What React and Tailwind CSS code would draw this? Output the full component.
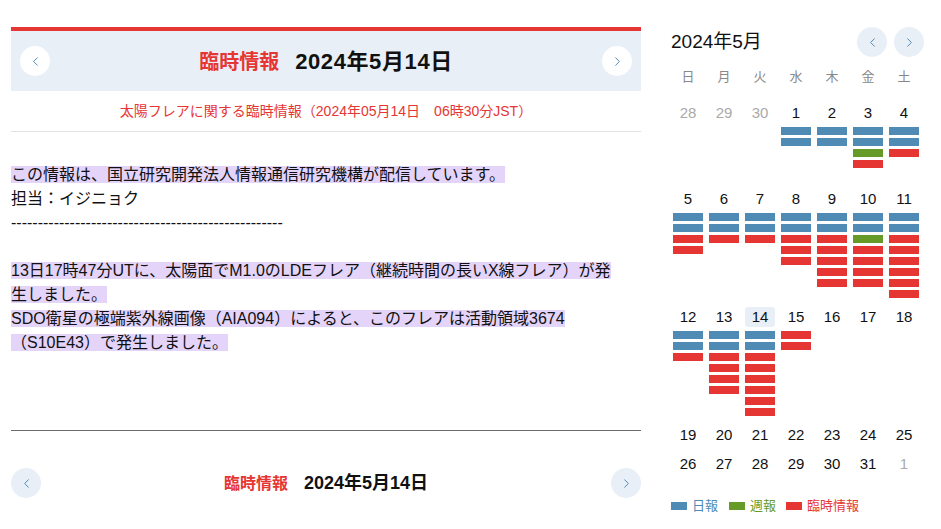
import { ChevronLeft, ChevronRight } from 'lucide-react';

const B = 'b';
const G = 'g';
const R = 'r';

const weeks = [
  [
    { d: 28, out: true }, { d: 29, out: true }, { d: 30, out: true },
    { d: 1, bars: [B, B] }, { d: 2, bars: [B, B] }, { d: 3, bars: [B, B, G, R] }, { d: 4, bars: [B, B, R] },
  ],
  [
    { d: 5, bars: [B, B, R, R] }, { d: 6, bars: [B, B, R] }, { d: 7, bars: [B, B, R] },
    { d: 8, bars: [B, B, R, R, R] }, { d: 9, bars: [B, B, R, R, R, R, R] },
    { d: 10, bars: [B, B, G, R, R, R, R] }, { d: 11, bars: [B, B, R, R, R, R, R, R] },
  ],
  [
    { d: 12, bars: [B, B, R] }, { d: 13, bars: [B, B, R, R, R, R] },
    { d: 14, today: true, bars: [B, B, R, R, R, R, R, R] }, { d: 15, bars: [R, R] },
    { d: 16 }, { d: 17 }, { d: 18 },
  ],
  [{ d: 19 }, { d: 20 }, { d: 21 }, { d: 22 }, { d: 23 }, { d: 24 }, { d: 25 }],
  [{ d: 26 }, { d: 27 }, { d: 28 }, { d: 29 }, { d: 30 }, { d: 31 }, { d: 1, out: true }],
];

const barColor = { b: 'bg-[#508bb5]', g: 'bg-[#679b28]', r: 'bg-[#e63633]' };

function NavButton({ dir, tone = 'white' }) {
  const Icon = dir === 'left' ? ChevronLeft : ChevronRight;
  return (
    <button
      className={`w-[30px] h-[30px] rounded-full flex items-center justify-center shrink-0 ${
        tone === 'white' ? 'bg-white' : 'bg-[#e8eff6]'
      }`}
    >
      <Icon size={15} strokeWidth={1.6} className="text-[#508bb5]" />
    </button>
  );
}

function Calendar() {
  return (
    <div className="w-[254px] shrink-0">
      {/* Month header */}
      <div className="flex items-center justify-between h-[30px]">
        <h3 className="text-[19px] text-[#111] pl-[1px]">2024年5月</h3>
        <div className="flex gap-[7px]">
          <NavButton dir="left" tone="blue" />
          <NavButton dir="right" tone="blue" />
        </div>
      </div>

      {/* Weekdays */}
      <div className="grid grid-cols-7 w-[252px] mt-[10px] h-[20px] leading-[20px] text-[13px] text-[#888]">
        {['日', '月', '火', '水', '木', '金', '土'].map((w) => (
          <div key={w} className="text-center">{w}</div>
        ))}
      </div>

      {/* Weeks */}
      <div className="mt-[16px] w-[252px]">
        {weeks.map((week, i) => {
          const hasBars = week.some((c) => c.bars);
          return (
            <div key={i} className="grid grid-cols-7 pb-[9px]">
              {week.map((c, j) => (
                <div key={j} className="flex flex-col items-center">
                  <div
                    className={`w-[30px] h-[20px] leading-[20px] text-center text-[15px] rounded-[3px] ${
                      c.out ? 'text-[#aaa]' : 'text-[#111]'
                    } ${c.today ? 'bg-[#e8eff6]' : ''}`}
                  >
                    {c.d}
                  </div>
                  {hasBars && (
                    <div className="mt-[4px] flex flex-col gap-[3px] min-h-[53px]">
                      {(c.bars || []).map((b, k) => (
                        <div key={k} className={`w-[30px] h-[8px] ${barColor[b]}`} />
                      ))}
                    </div>
                  )}
                </div>
              ))}
            </div>
          );
        })}
      </div>

      {/* Legend */}
      <div className="flex items-center mt-[15px] text-[13px] leading-[16px] pl-[1px]">
        <span className="w-[16px] h-[8px] bg-[#508bb5]" />
        <span className="ml-[5px] text-[#508bb5]">日報</span>
        <span className="ml-[11px] w-[16px] h-[8px] bg-[#679b28]" />
        <span className="ml-[5px] text-[#679b28]">週報</span>
        <span className="ml-[10px] w-[16px] h-[8px] bg-[#e63633]" />
        <span className="ml-[5px] text-[#e63633]">臨時情報</span>
      </div>
    </div>
  );
}

export default function App() {
  const mark = 'bg-[#e5d4fa]';
  return (
    <div className="min-h-screen bg-white font-['Liberation_Sans','Noto_Sans_CJK_JP',sans-serif] text-[#111]">
      <div className="flex pt-[27px] pl-[11px] gap-[29px]">
        {/* Report column */}
        <div className="w-[630px] shrink-0">
          <div className="border-t-4 border-[#e63633] bg-[#e8eff6] h-[64px] px-[9px] flex items-center justify-between">
            <NavButton dir="left" />
            <h2 className="flex items-baseline gap-[16px] font-bold">
              <span className="text-[20px] text-[#e63633]">臨時情報</span>
              <span className="text-[22px] tracking-[0.6px]">2024年5月14日</span>
            </h2>
            <NavButton dir="right" />
          </div>

          <div className="h-[41px] flex items-center justify-center border-b border-[#e3e3e3] text-[14px] text-[#e63633]">
            太陽フレアに関する臨時情報（2024年05月14日　06時30分JST）
          </div>

          <div className="pt-[31px] h-[299px] border-b border-[#6b6b6b] text-[16px] leading-[24px] whitespace-nowrap">
            <span className={mark}>この情報は、国立研究開発法人情報通信研究機構が配信しています。</span>
            <br />
            担当：イジニョク
            <br />
            ---------------------------------------------------
            <br />
            <br />
            <span className={mark}>
              13日17時47分UTに、太陽面でM1.0のLDEフレア（継続時間の長いX線フレア）が発
              <br />
              生しました。
              <br />
              SDO衛星の極端紫外線画像（AIA094）によると、このフレアは活動領域3674
              <br />
              （S10E43）で発生しました。
            </span>
          </div>

          <div className="mt-[37px] flex items-center justify-between">
            <NavButton dir="left" tone="blue" />
            <h2 className="flex items-baseline gap-[16px] font-bold">
              <span className="text-[16px] text-[#e63633]">臨時情報</span>
              <span className="text-[18px]">2024年5月14日</span>
            </h2>
            <NavButton dir="right" tone="blue" />
          </div>
        </div>

        <Calendar />
      </div>
    </div>
  );
}
